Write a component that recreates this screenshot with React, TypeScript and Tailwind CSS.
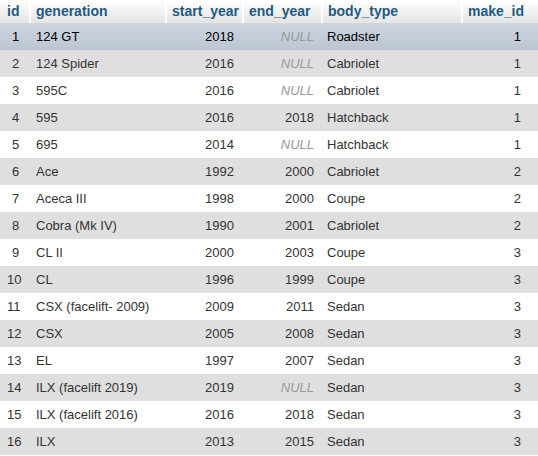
const rows: [number, string, number, number | null, string, number][] = [
  [1, '124 GT', 2018, null, 'Roadster', 1],
  [2, '124 Spider', 2016, null, 'Cabriolet', 1],
  [3, '595C', 2016, null, 'Cabriolet', 1],
  [4, '595', 2016, 2018, 'Hatchback', 1],
  [5, '695', 2014, null, 'Hatchback', 1],
  [6, 'Ace', 1992, 2000, 'Cabriolet', 2],
  [7, 'Aceca III', 1998, 2000, 'Coupe', 2],
  [8, 'Cobra (Mk IV)', 1990, 2001, 'Cabriolet', 2],
  [9, 'CL II', 2000, 2003, 'Coupe', 3],
  [10, 'CL', 1996, 1999, 'Coupe', 3],
  [11, 'CSX (facelift- 2009)', 2009, 2011, 'Sedan', 3],
  [12, 'CSX', 2005, 2008, 'Sedan', 3],
  [13, 'EL', 1997, 2007, 'Sedan', 3],
  [14, 'ILX (facelift 2019)', 2019, null, 'Sedan', 3],
  [15, 'ILX (facelift 2016)', 2016, 2018, 'Sedan', 3],
  [16, 'ILX', 2013, 2015, 'Sedan', 3],
];

export default function App() {
  return (
    <div className="w-[538px] h-[456px] overflow-hidden bg-white" style={{ fontFamily: '"Liberation Sans", Arial, sans-serif' }}>
      <table className="border-collapse text-[13px] text-[#333] w-[538px]">
        <thead>
          <tr className="h-[23px] bg-gradient-to-b from-white to-[#e4e4e4] text-[#235a81] text-[14px] font-bold">
            <th className="w-[30px] text-left pl-[7px] border-r-2 border-white">id</th>
            <th className="w-[136px] text-left pl-[5px] border-r-2 border-white">generation</th>
            <th className="w-[77px] text-left pl-[5px] border-r-2 border-white">start_year</th>
            <th className="w-[79px] text-left pl-[5px] border-r-2 border-white">end_year</th>
            <th className="w-[140px] text-left pl-[5px] border-r-2 border-white">body_type</th>
            <th className="text-left pl-[5px]">make_id</th>
          </tr>
        </thead>
        <tbody>
          {rows.map((r, i) => (
            <tr
              key={r[0]}
              className={`h-[27px] ${i === 0 ? 'bg-gradient-to-b from-[#ced6df] to-[#bcc6d3] text-black' : i % 2 === 1 ? 'bg-[#dfdfdf]' : 'bg-white'}`}
            >
              <td className="pl-[12px]">{r[0] >= 10 ? <span className="-ml-[5px]">{r[0]}</span> : r[0]}</td>
              <td className="pl-[6px]">{r[1]}</td>
              <td className="text-right pr-[9px]">{r[2]}</td>
              <td className="text-right pr-[8px]">
                {r[3] === null ? <i className="text-[#999]">NULL</i> : r[3]}
              </td>
              <td className="pl-[5px]">{r[4]}</td>
              <td className="text-right pr-[17px]">{r[5]}</td>
            </tr>
          ))}
        </tbody>
      </table>
    </div>
  );
}
